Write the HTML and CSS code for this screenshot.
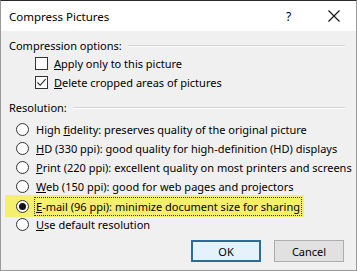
FILE: index.html
```html
<!DOCTYPE html>
<html>
<head>
<meta charset="utf-8">
<link rel="stylesheet" href="styles.css">
</head>
<body>
<div class="dialog">
  <div class="titlebar">
    <span class="title">Compress Pictures</span>
    <span class="help">?</span>
    <svg class="close" width="12" height="12" viewBox="0 0 12 12"><path d="M0.5 0.5L11.5 11.5M11.5 0.5L0.5 11.5" stroke="#111" stroke-width="1.1" fill="none"/></svg>
  </div>
  <div class="body">
    <div class="group-head"><span>Compression options:</span><div class="etch"></div></div>
    <div class="checks">
      <div class="check-row"><span class="box"></span><span><u>A</u>pply only to this picture</span></div>
      <div class="check-row"><span class="box"><svg width="11" height="11" viewBox="0 0 11 11"><path d="M1.5 5.5L4.2 8.3L9.6 2.2" stroke="#222" stroke-width="1.1" fill="none"/></svg></span><span><u>D</u>elete cropped areas of pictures</span></div>
    </div>
    <div class="group-head res"><span>Resolution:</span><div class="etch"></div></div>
    <div class="radios">
      <div class="radio-row"><span class="radio"></span><span class="lbl">High <u>f</u>idelity: preserves quality of the original picture</span></div>
      <div class="radio-row"><span class="radio"></span><span class="lbl"><u>H</u>D (330 ppi): good quality for high-definition (HD) displays</span></div>
      <div class="radio-row"><span class="radio"></span><span class="lbl"><u>P</u>rint (220 ppi): excellent quality on most printers and screens</span></div>
      <div class="radio-row"><span class="radio"></span><span class="lbl"><u>W</u>eb (150 ppi): good for web pages and projectors</span></div>
      <div class="radio-row selected"><span class="radio on"></span><span class="lbl focus"><u>E</u>-mail (96 ppi): minimize document size for sharing</span></div>
      <div class="radio-row"><span class="radio"></span><span class="lbl"><u>U</u>se default resolution</span></div>
    </div>
    <div class="buttons">
      <button class="btn default">OK</button>
      <button class="btn">Cancel</button>
    </div>
  </div>
</div>
</body>
</html>
```
FILE: styles.css
```css
* { box-sizing: border-box; }
html, body { margin: 0; padding: 0; background: #f0f0f0; }
body {
  font-family: "Noto Sans", "Open Sans", sans-serif;
  font-size: 11px;
  color: #000;
}
.dialog {
  width: 357px;
  height: 271px;
  border-top: 1px solid #2b2b2b;
  border-left: 1px solid #9a9a9a;
  border-right: 1px solid #9a9a9a;
  border-bottom: 1px solid #9a9a9a;
  background: #f0f0f0;
  display: flex;
  flex-direction: column;
}
.titlebar {
  height: 30px;
  background: #fff;
  display: flex;
  align-items: center;
  padding-left: 8px;
  flex-shrink: 0;
}
.title { font-size: 11.5px; flex: 1; }
.help { width: 10px; margin-right: 32px; font-size: 12px; }
.close { margin-right: 16px; }
.body {
  flex: 1;
  padding: 7px 11px 0 8px;
  display: flex;
  flex-direction: column;
}
.group-head {
  display: flex;
  align-items: center;
  height: 15px;
}
.etch {
  flex: 1;
  margin-left: 6px;
  height: 2px;
  border-top: 1px solid #d5d5d5;
  border-bottom: 1px solid #fff;
}
.checks {
  padding-left: 26px;
  padding-top: 4px;
  display: flex;
  flex-direction: column;
  gap: 6px;
}
.check-row { display: flex; align-items: center; height: 13px; gap: 6px; }
.box {
  width: 13px; height: 13px;
  border: 1px solid #333;
  background: #fff;
  display: flex; align-items: center; justify-content: center;
}
.res { margin-top: 11px; }
.radios {
  padding-top: 5px;
  display: flex;
  flex-direction: column;
  align-items: flex-start;
}
.radio-row {
  display: flex;
  align-items: center;
  height: 19px;
  padding-left: 7px;
}
.radio {
  width: 13px; height: 13px;
  border: 1px solid #333;
  border-radius: 50%;
  background: #fff;
  margin-right: 7px;
  flex-shrink: 0;
  display: flex; align-items: center; justify-content: center;
}
.radio.on::after {
  content: "";
  width: 7px; height: 7px;
  border-radius: 50%;
  background: #111;
}
.selected {
  background: #f6ef6e;
  height: 22px;
  margin-left: -4px;
  padding-left: 11px;
  padding-right: 4px;
  margin-top: -1px;
  margin-bottom: -2px;
}
.focus {
  outline: 1px dotted #333;
  outline-offset: 1px;
}
.lbl { white-space: nowrap; }
.buttons {
  display: flex;
  justify-content: flex-end;
  gap: 13px;
  margin-top: auto;
  margin-bottom: 8px;
  padding-right: 1px;
}
.btn {
  font-family: inherit;
  font-size: 11px;
  width: 70px;
  height: 22px;
  background: #e1e1e1;
  border: 1px solid #adadad;
  padding: 0;
  color: #000;
}
.btn.default {
  border: 2px solid #2a6c9c;
  background: #e5f1fb;
}
```
